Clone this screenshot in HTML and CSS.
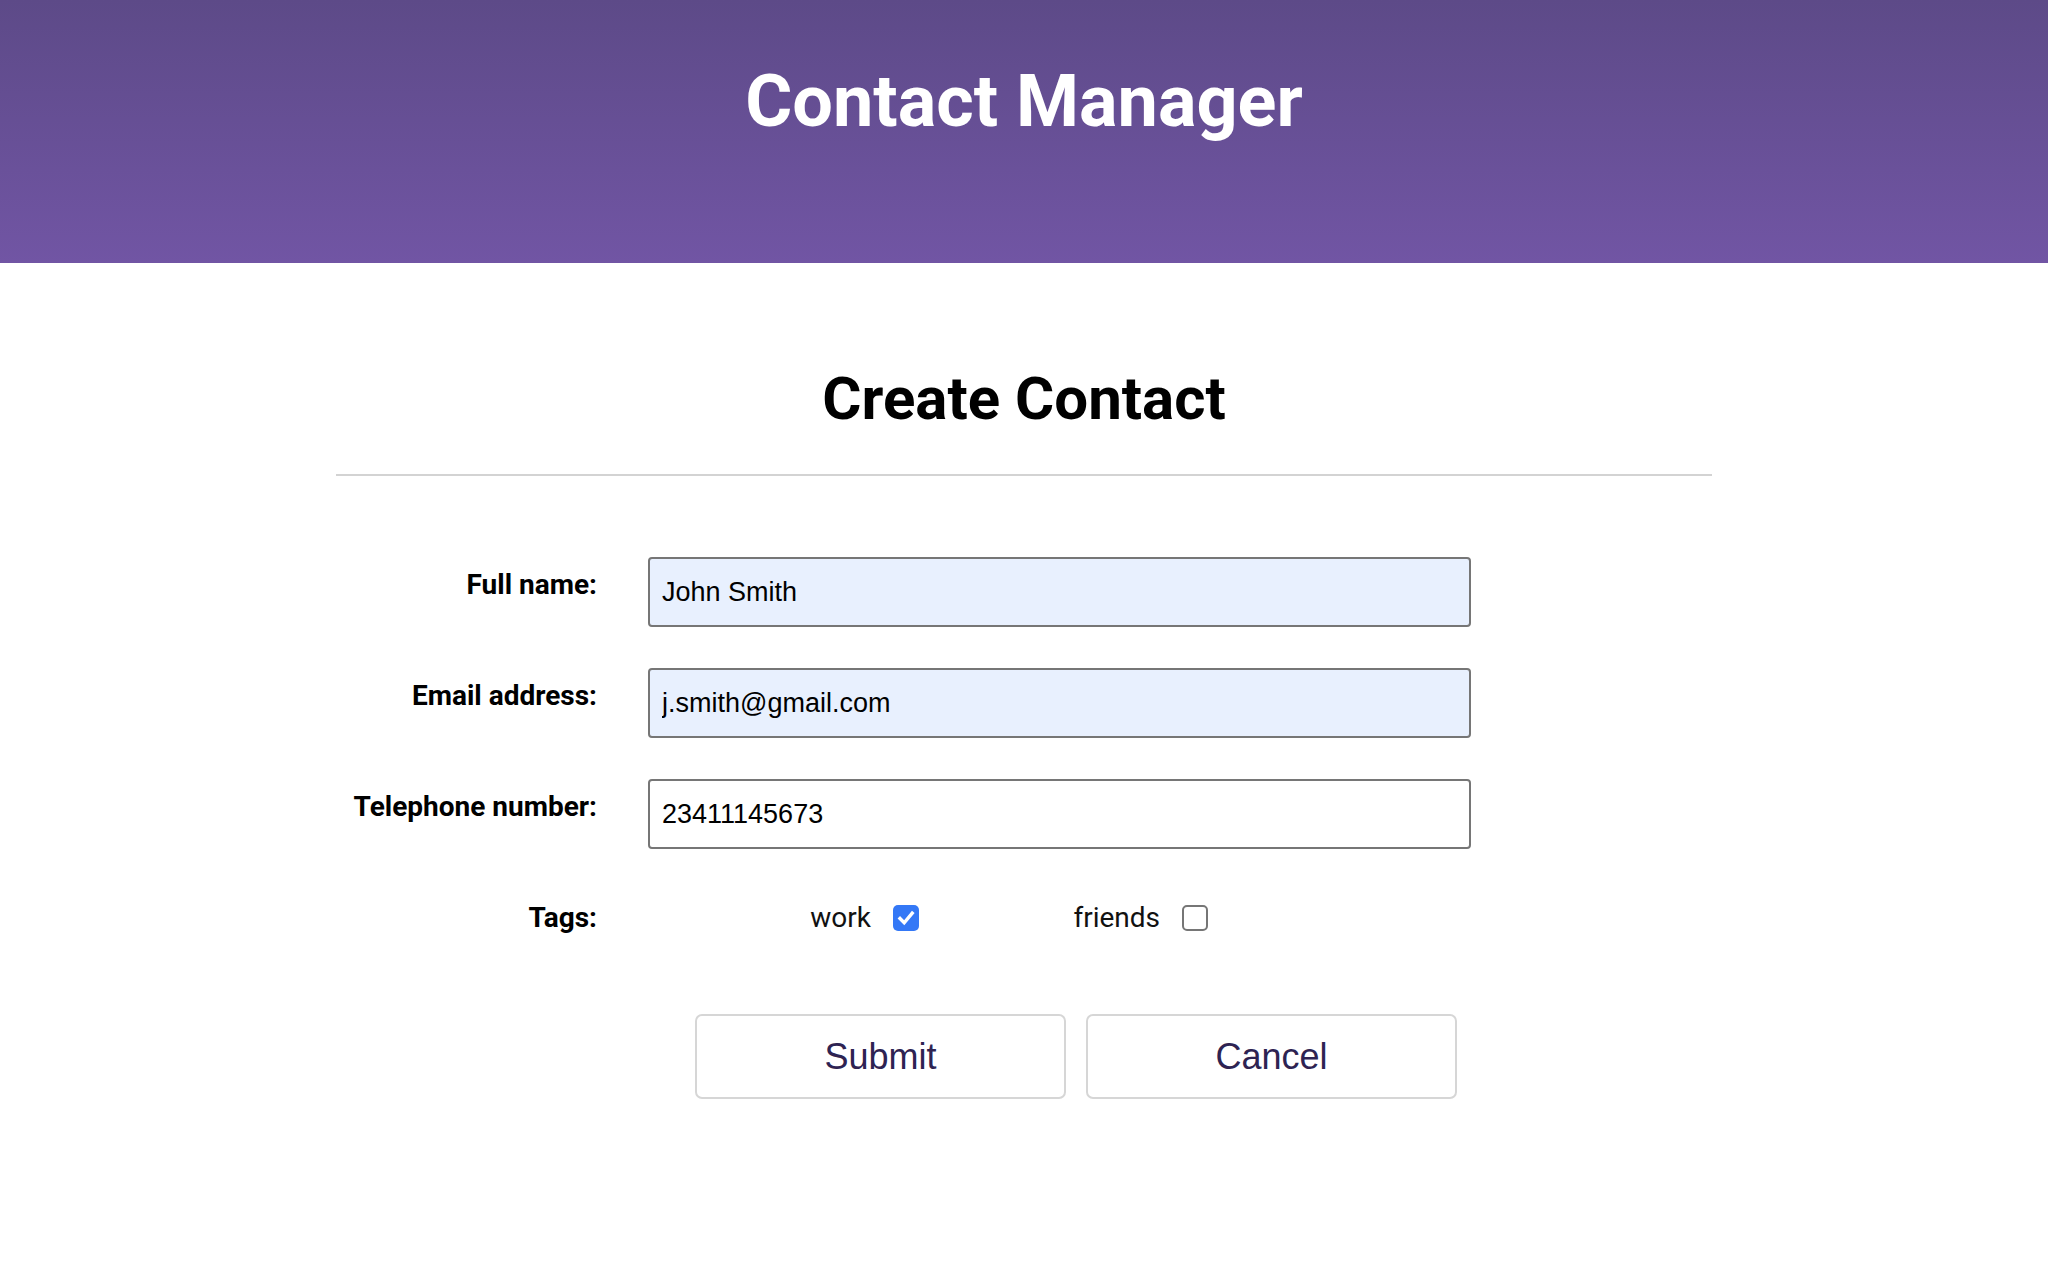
FILE: index.html
```html
<!DOCTYPE html>
<html lang="en">
<head>
<meta charset="utf-8">
<title>Contact Manager</title>
<link rel="stylesheet" href="styles.css">
</head>
<body>
<header class="app-header">
  <h1 class="app-title">Contact Manager</h1>
</header>
<main class="page">
  <h2 class="page-title">Create Contact</h2>
  <hr class="divider">
  <form class="contact-form">
    <div class="form-row">
      <label class="form-label" for="name">Full name:</label>
      <input class="form-input autofilled" id="name" type="text" value="John Smith">
    </div>
    <div class="form-row">
      <label class="form-label" for="email">Email address:</label>
      <input class="form-input autofilled" id="email" type="text" value="j.smith@gmail.com">
    </div>
    <div class="form-row">
      <label class="form-label" for="phone">Telephone number:</label>
      <input class="form-input" id="phone" type="text" value="23411145673">
    </div>
    <div class="form-row tags-row">
      <span class="form-label">Tags:</span>
      <div class="tags">
        <label class="tag">
          <span class="tag-name">work</span>
          <span class="checkbox checked"><svg viewBox="0 0 26 26" width="26" height="26"><polyline points="7,13.5 11.2,17.8 19.2,8.2" fill="none" stroke="#fff" stroke-width="3.4" stroke-linecap="square" stroke-linejoin="miter"/></svg></span>
        </label>
        <label class="tag">
          <span class="tag-name">friends</span>
          <span class="checkbox"></span>
        </label>
      </div>
    </div>
    <div class="actions">
      <button class="btn" type="button">Submit</button>
      <button class="btn" type="button">Cancel</button>
    </div>
  </form>
</main>
</body>
</html>
```

FILE: styles.css
```css
html, body {
  margin: 0;
  padding: 0;
  background: #ffffff;
}

body {
  font-family: Roboto, "Liberation Sans", Arial, sans-serif;
  color: #000;
}

.app-header {
  box-sizing: border-box;
  height: 263px;
  padding-top: 60px;
  background: linear-gradient(to bottom, #5d4a88 0%, #7155a4 100%);
}

.app-title {
  margin: 0;
  text-align: center;
  color: #ffffff;
  font-family: Roboto, sans-serif;
  font-weight: 700;
  font-size: 72px;
  line-height: 84px;
}

.page {
  width: 1376px;
  margin: 0 auto;
}

.page-title {
  margin: 101px 0 0;
  text-align: center;
  font-family: Roboto, sans-serif;
  font-weight: 700;
  font-size: 60px;
  line-height: 70px;
}

.divider {
  margin: 40px 0 0;
  border: 0;
  height: 2px;
  background: #d3d3d3;
}

.contact-form {
  margin-top: 81px;
}

.form-row {
  display: grid;
  grid-template-columns: 261px 823px;
  column-gap: 51px;
  align-items: start;
  margin-bottom: 41px;
}

.form-label {
  text-align: right;
  font-family: Roboto, sans-serif;
  font-weight: 700;
  font-size: 28px;
  line-height: 33px;
  padding-top: 11px;
}

.form-input {
  box-sizing: border-box;
  height: 70px;
  width: 100%;
  margin: 0;
  padding: 0 12px;
  border: 2px solid #767676;
  border-radius: 4px;
  background: #ffffff;
  font-family: "Liberation Sans", Arial, sans-serif;
  font-size: 27px;
  color: #000;
  outline: none;
}

.form-input.autofilled {
  background: #e8f0fe;
}

.tags-row {
  align-items: center;
  height: 60px;
  margin-top: -3px;
  margin-bottom: 67px;
}

.tags-row .form-label {
  padding-top: 0;
}

.tags {
  display: flex;
  align-items: center;
}

.tag {
  display: flex;
  align-items: center;
  width: 289px;
}

.tag-name {
  width: 223px;
  text-align: right;
  font-family: Roboto, sans-serif;
  font-size: 28px;
  line-height: 33px;
  color: #111;
}

.checkbox {
  box-sizing: border-box;
  width: 26px;
  height: 26px;
  margin-left: 22px;
  margin-top: 2px;
  border: 2px solid #767676;
  border-radius: 5px;
  background: #fff;
  display: flex;
}

.checkbox.checked {
  border: 0;
  background: #3478f6;
}

.actions {
  display: flex;
  gap: 20px;
  padding-left: 359px;
}

.btn {
  box-sizing: border-box;
  width: 371px;
  height: 85px;
  margin: 0;
  border: 2px solid #d6d6d6;
  border-radius: 7px;
  background: #ffffff;
  font-family: "Liberation Sans", Arial, sans-serif;
  font-size: 36px;
  color: #2e2352;
  cursor: pointer;
}
```
